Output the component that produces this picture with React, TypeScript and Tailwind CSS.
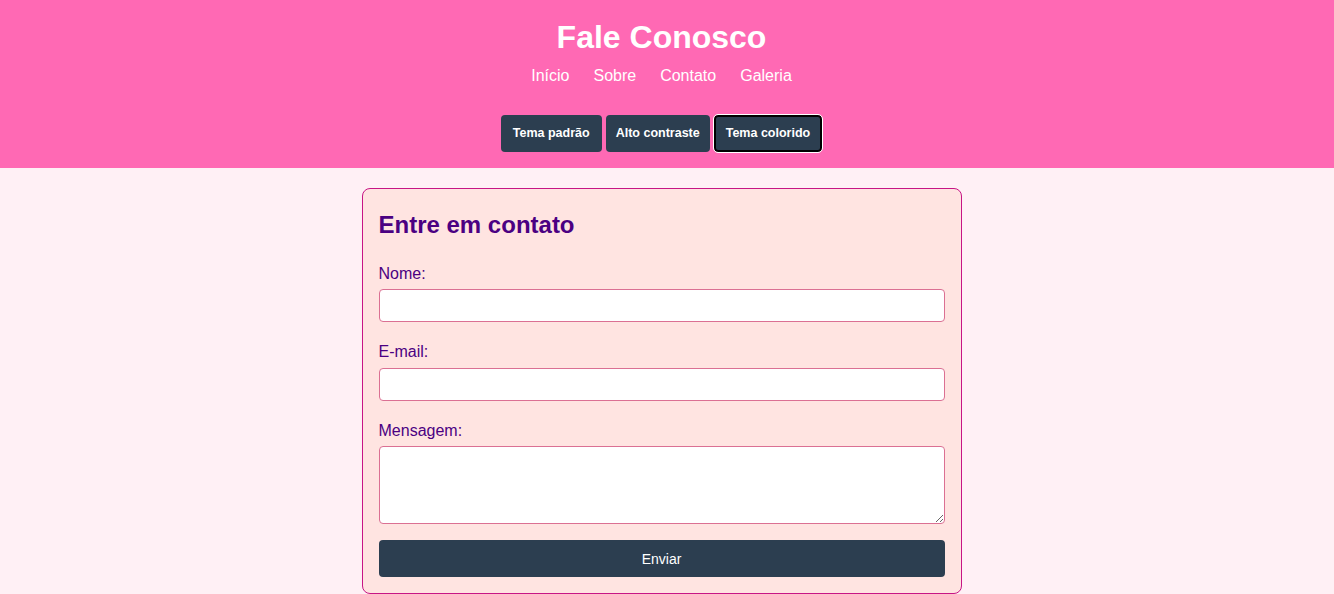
import React from "react";

const font = { fontFamily: '"Liberation Sans", Arial, sans-serif' };

const App = () => {
  const links = ["Início", "Sobre", "Contato", "Galeria"];
  return (
    <div style={font} className="min-h-[594px] bg-[#fff0f5]">
      <header className="bg-[#ff69b4] pt-[19px] pb-4 pr-[11px] text-center text-white">
        <h1 className="text-[32px] leading-[37px] font-bold">Fale Conosco</h1>
        <nav className="mt-[11px] flex justify-center gap-6 text-base leading-[18px]">
          {links.map((l) => (
            <a key={l} href="#" className="text-white">{l}</a>
          ))}
        </nav>
        <div className="mt-[30px] flex justify-center gap-1">
          <button className="h-[37px] px-3 rounded bg-[#2c3e50] text-[12.5px] font-bold text-white">Tema padrão</button>
          <button className="h-[37px] px-[10px] rounded bg-[#2c3e50] text-[12.5px] font-bold text-white">Alto contraste</button>
          <button className="h-[37px] px-[10px] rounded bg-[#2c3e50] text-[12.5px] font-bold text-white border-2 border-black outline outline-1 outline-white">Tema colorido</button>
        </div>
      </header>
      <main className="flex justify-center pt-5 pr-[11px]">
        <form className="w-[600px] bg-[#ffe4e1] border border-[#c71585] rounded-lg pt-[22px] px-4 pb-4 text-[#4b0082]">
          <h2 className="text-2xl leading-[28px] font-bold mb-[26px]">Entre em contato</h2>
          <label className="block leading-[18px] mb-[6px]">Nome:</label>
          <input className="block w-full h-[33px] bg-white border border-[#db7093] rounded mb-[21px]" />
          <label className="block leading-[18px] mb-[7px]">E-mail:</label>
          <input className="block w-full h-[33px] bg-white border border-[#db7093] rounded mb-[21px]" />
          <label className="block leading-[18px] mb-[6px]">Mensagem:</label>
          <textarea className="block w-full h-[78px] bg-white border border-[#db7093] rounded mb-[16px]" />
          <button type="button" className="block w-full h-[37px] rounded bg-[#2c3e50] text-white text-sm">Enviar</button>
        </form>
      </main>
    </div>
  );
};

export default App;
